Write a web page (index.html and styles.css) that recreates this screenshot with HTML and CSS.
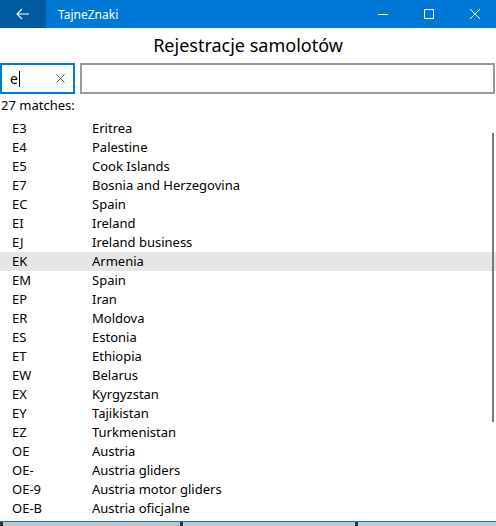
FILE: index.html
```html
<!DOCTYPE html>
<html>
<head>
<meta charset="utf-8">
<link rel="stylesheet" href="styles.css">
</head>
<body>
<div class="app">
  <div class="titlebar">
    <div class="back">
      <svg width="14" height="12" viewBox="0 0 14 12"><path d="M6 1 L1 6 L6 11 M1 6 H13" fill="none" stroke="#fff" stroke-width="1.1"/></svg>
    </div>
    <div class="apptitle">TajneZnaki</div>
    <div class="controls">
      <div class="ctl"><svg width="10" height="10" viewBox="0 0 10 10"><path d="M0 5.5 H10" stroke="#fff" stroke-width="1"/></svg></div>
      <div class="ctl"><svg width="10" height="10" viewBox="0 0 10 10"><rect x="0.5" y="0.5" width="9" height="9" fill="none" stroke="#fff" stroke-width="1"/></svg></div>
      <div class="ctl"><svg width="10" height="10" viewBox="0 0 10 10"><path d="M0 0 L10 10 M10 0 L0 10" stroke="#fff" stroke-width="1"/></svg></div>
    </div>
  </div>
  <h1 class="heading">Rejestracje samolotów</h1>
  <div class="searchrow">
    <div class="search active"><span class="val">e</span><span class="caret"></span><svg class="clear" width="9" height="9" viewBox="0 0 9 9"><path d="M0.5 0.5 L8.5 8.5 M8.5 0.5 L0.5 8.5" stroke="#444" stroke-width="0.9"/></svg></div>
    <div class="search wide"></div>
  </div>
  <div class="matches">27 matches:</div>
  <div class="listwrap">
    <ul class="list">
      <li><span class="code">E3</span><span>Eritrea</span></li>
      <li><span class="code">E4</span><span>Palestine</span></li>
      <li><span class="code">E5</span><span>Cook Islands</span></li>
      <li><span class="code">E7</span><span>Bosnia and Herzegovina</span></li>
      <li><span class="code">EC</span><span>Spain</span></li>
      <li><span class="code">EI</span><span>Ireland</span></li>
      <li><span class="code">EJ</span><span>Ireland business</span></li>
      <li class="sel"><span class="code">EK</span><span>Armenia</span></li>
      <li><span class="code">EM</span><span>Spain</span></li>
      <li><span class="code">EP</span><span>Iran</span></li>
      <li><span class="code">ER</span><span>Moldova</span></li>
      <li><span class="code">ES</span><span>Estonia</span></li>
      <li><span class="code">ET</span><span>Ethiopia</span></li>
      <li><span class="code">EW</span><span>Belarus</span></li>
      <li><span class="code">EX</span><span>Kyrgyzstan</span></li>
      <li><span class="code">EY</span><span>Tajikistan</span></li>
      <li><span class="code">EZ</span><span>Turkmenistan</span></li>
      <li><span class="code">OE</span><span>Austria</span></li>
      <li><span class="code">OE-</span><span>Austria gliders</span></li>
      <li><span class="code">OE-9</span><span>Austria motor gliders</span></li>
      <li><span class="code">OE-B</span><span>Austria oficjalne</span></li>
    </ul>
    <div class="scrollbar"></div>
  </div>
  <div class="taskbar">
    <div class="tb t1"></div>
    <div class="tb t2"></div>
    <div class="tb t3"></div>
  </div>
</div>
</body>
</html>
```
FILE: styles.css
```css
* { box-sizing: border-box; }
html, body { margin: 0; padding: 0; }
body {
  width: 496px;
  height: 526px;
  overflow: hidden;
  background: #fff;
  font-family: "Noto Sans", "Open Sans", sans-serif;
  color: #000;
}
.app { display: flex; flex-direction: column; height: 526px; }
.titlebar {
  height: 28px;
  background: #0078d7;
  display: flex;
  align-items: center;
  color: #fff;
  flex: none;
}
.back {
  width: 46px;
  height: 28px;
  background: #005a9e;
  display: flex;
  align-items: center;
  justify-content: center;
}
.apptitle { margin-left: 12px; font-size: 12px; flex: 1; }
.controls { display: flex; margin-right: -2px; }
.ctl { width: 46px; height: 28px; display: flex; align-items: center; justify-content: center; }
.heading {
  margin: 0;
  height: 35px;
  font-weight: normal;
  font-size: 18px;
  text-align: center;
  line-height: 35px;
  flex: none;
}
.searchrow { display: flex; gap: 5px; height: 31px; flex: none; }
.search {
  border: 2px solid #999;
  height: 31px;
  display: flex;
  align-items: center;
  font-size: 14px;
}
.search.active { width: 75px; border-color: #0078d7; padding-left: 8px; }
.search.wide { flex: 1; margin-right: 1px; }
.val { line-height: 1; }
.caret { width: 1px; height: 16px; background: #000; margin-left: 1px; }
.clear { margin-left: auto; margin-right: 8px; }
.matches { font-size: 13px; height: 25px; line-height: 22px; padding-left: 1px; flex: none; }
.listwrap { flex: 1; position: relative; overflow: hidden; }
.list { list-style: none; margin: 0; padding: 0; }
.list li {
  height: 19px;
  line-height: 19px;
  font-size: 13px;
  display: flex;
  padding-left: 12px;
}
.list li.sel { background: #e6e6e6; }
.code { width: 80px; flex: none; }
.scrollbar {
  position: absolute;
  right: 2px;
  top: 14px;
  width: 2px;
  height: 289px;
  background: #7a7a7a;
}
.taskbar {
  height: 5px;
  border-top: 1px solid #0078d7;
  background: #c8c8c8;
  display: flex;
  flex: none;
}
.tb { height: 4px; }
.t1 { width: 180px; border-left: 3px solid #333; background: #c4c4c4; }
.t2 { width: 175px; border-left: 3px solid #333; background: #c8c8c8; }
.t3 { flex: 1; border-left: 3px solid #333; background: #cacaca; }
```
